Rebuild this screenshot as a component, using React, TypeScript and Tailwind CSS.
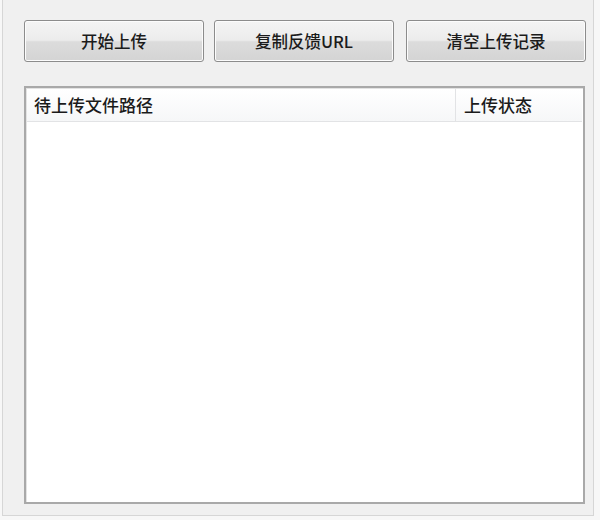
const font = { fontFamily: '"Noto Sans CJK SC", "Noto Sans", sans-serif' };

function WinButton({ label, extra = "" }: { label: string; extra?: string }) {
  return (
    <button
      className={`relative h-[42px] w-[180px] rounded-[3px] border border-[#8c8c8c] bg-[linear-gradient(#f4f4f4_0%,#ececec_48%,#dcdcdc_52%,#d4d4d4_100%)] text-[16.5px] font-medium text-[#1b1b1b] shadow-[inset_0_0_0_1px_#fcfcfc] ${extra}`}
    >
      {label}
    </button>
  );
}

export default function App() {
  return (
    <div className="h-[520px] w-[600px] bg-[#f7f7f7] pl-[2px]" style={font}>
      <div className="h-[516px] w-[592px] border-l border-r border-b border-[#d6d6d6] bg-[#f0f0f0] pl-[21px] pt-[20px]">
        <div className="flex gap-[10px]">
          <WinButton label="开始上传" />
          <WinButton label="复制反馈URL" />
          <WinButton label="清空上传记录" extra="ml-[2px]" />
        </div>

        <div className="mt-[24px] h-[418px] w-[561px] border-2 border-[#a9a9a9] bg-white p-[1px] shadow-[inset_1px_1px_0_#e3e3e3]">
          <div className="flex h-[33px] w-[555px] border-b border-[#e2e3e5] bg-[linear-gradient(#ffffff,#f6f7f8)] text-[17px] font-medium text-[#1b1b1b]">
            <div className="flex w-[429px] items-center border-r border-[#e2e3e5] pl-[7px]">
              待上传文件路径
            </div>
            <div className="flex flex-1 items-center pl-[8px]">上传状态</div>
          </div>
        </div>
      </div>
    </div>
  );
}
